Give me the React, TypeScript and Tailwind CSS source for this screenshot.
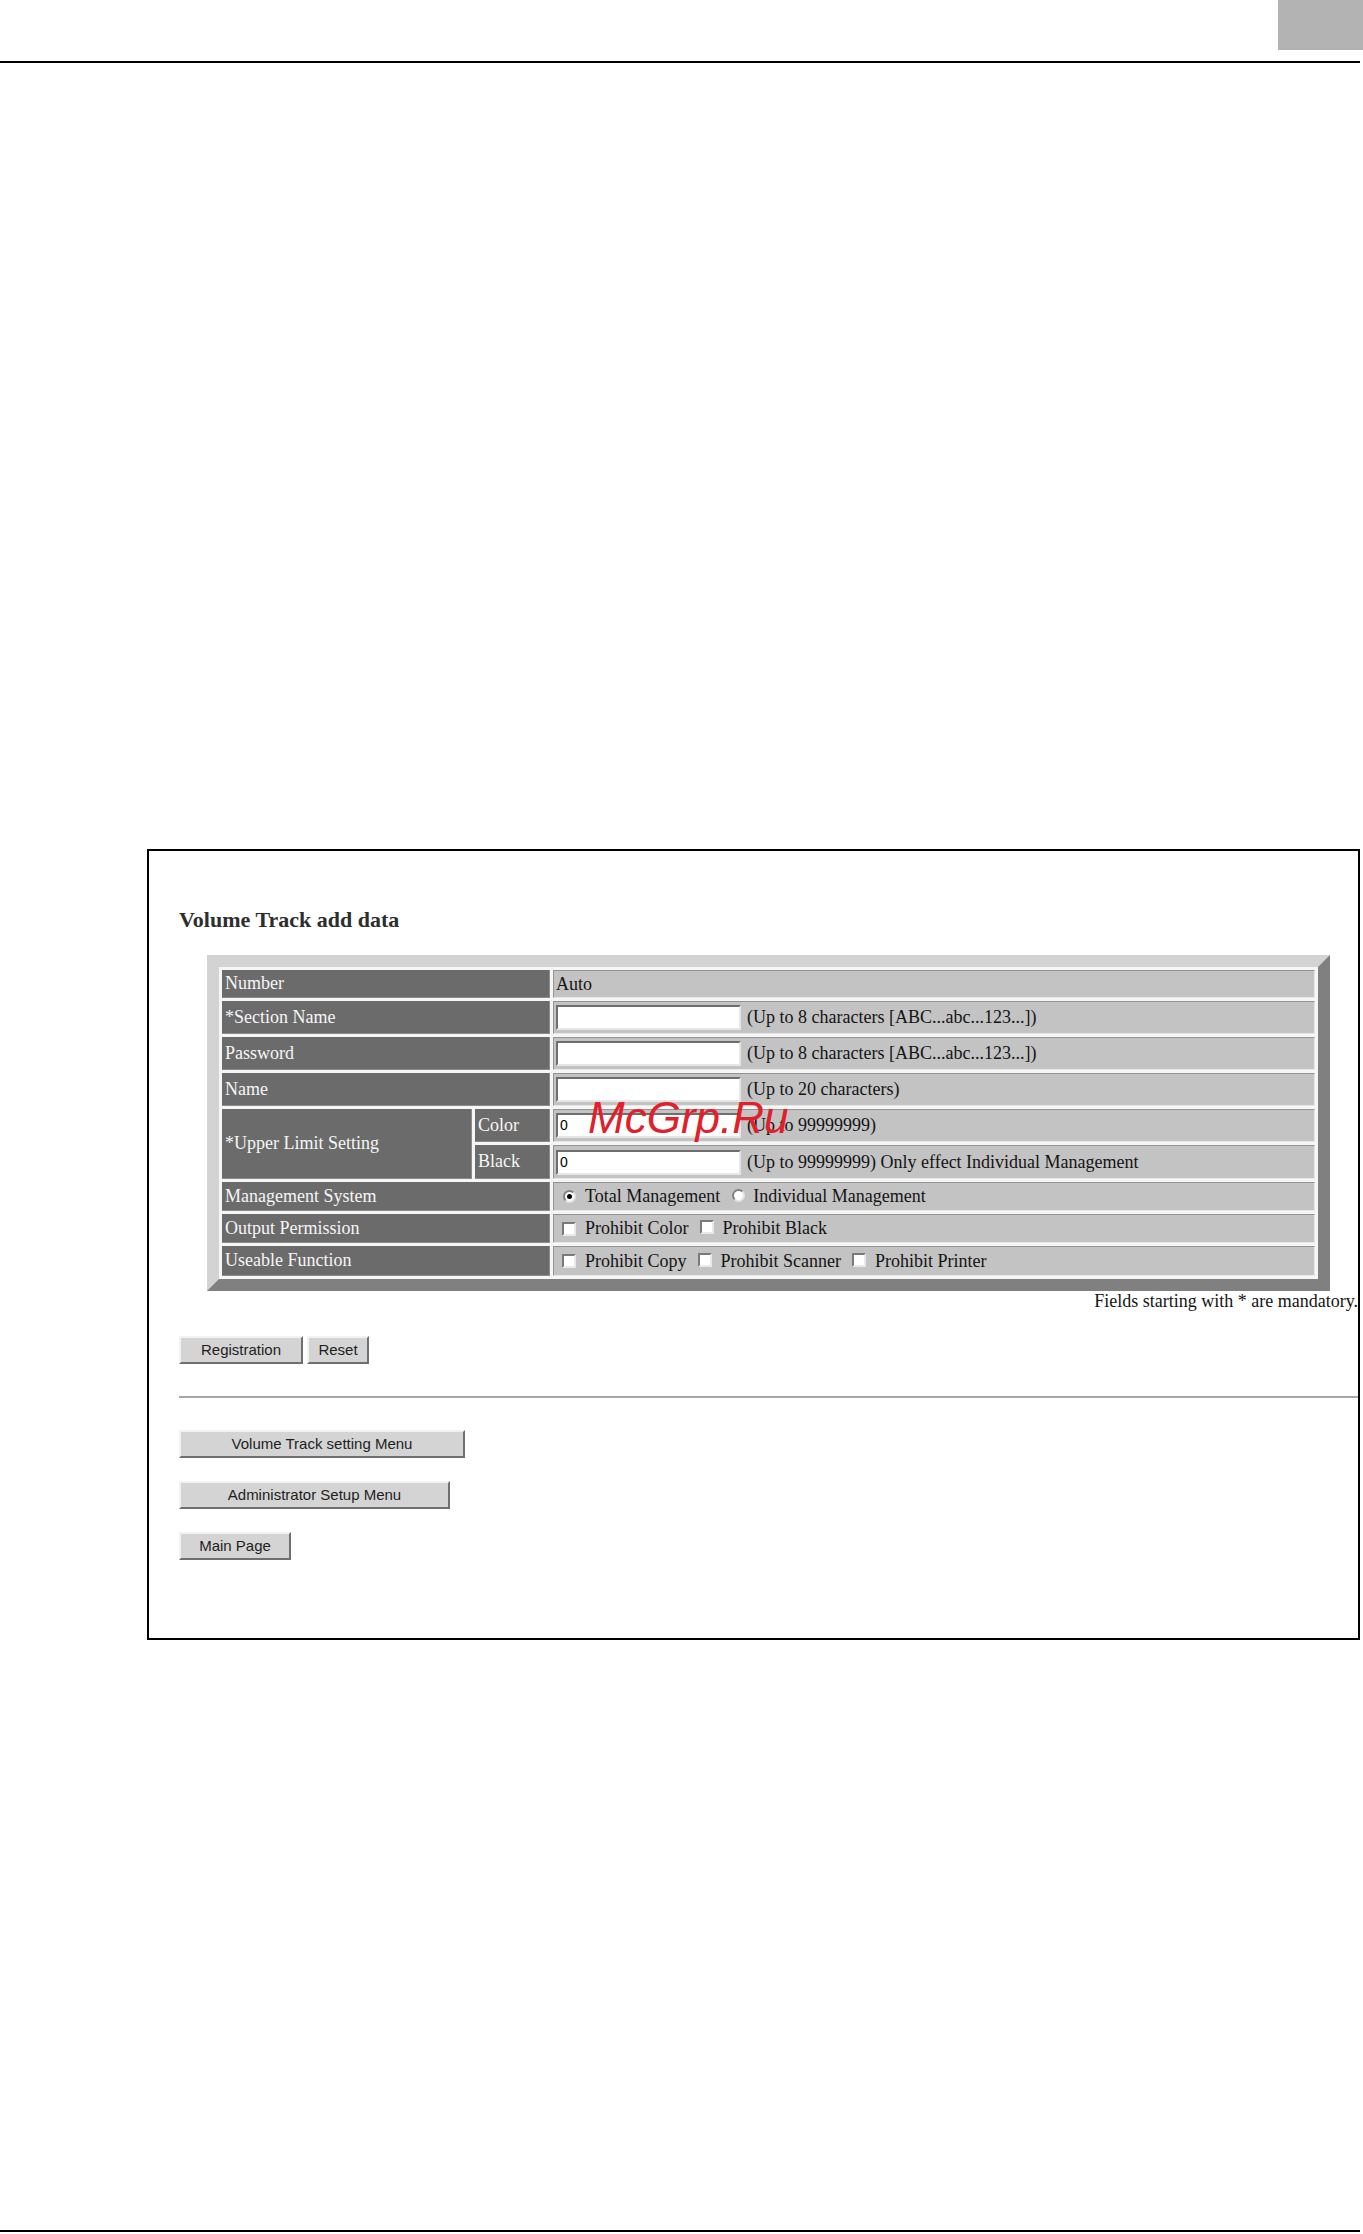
import React from 'react';

const serif = { fontFamily: '"Liberation Serif", "Times New Roman", serif' };

function Checkbox() {
  return (
    <span className="inline-block w-[14px] h-[14px] bg-white border-2 border-t-[#7a7a7a] border-l-[#7a7a7a] border-r-[#e8e8e8] border-b-[#e8e8e8] shrink-0" />
  );
}

function Radio({ checked }: { checked?: boolean }) {
  return (
    <span className="relative inline-flex items-center justify-center w-[13px] h-[13px] rounded-full bg-white border-2 border-t-[#808080] border-l-[#808080] border-r-[#e4e4e4] border-b-[#e4e4e4] shrink-0">
      {checked && <span className="w-[5px] h-[5px] rounded-full bg-black" />}
    </span>
  );
}

function TextInput({ value }: { value?: string }) {
  return (
    <span
      className="inline-flex items-center w-[185px] h-[25px] bg-white border-2 border-t-[#6e6e6e] border-l-[#6e6e6e] border-r-[#e6e6e6] border-b-[#e6e6e6] pl-[2px] text-[14px] text-black shrink-0"
      style={{ fontFamily: '"Liberation Sans", Arial, sans-serif' }}
    >
      {value}
    </span>
  );
}

function Label({ children, className = '' }: { children: React.ReactNode; className?: string }) {
  return (
    <div className={`flex items-center pl-[3px] bg-[#6b6b6b] text-[#f6f6f6] text-[18px] border-b border-r border-b-[#8c8c8c] border-r-[#8c8c8c] whitespace-nowrap ${className}`}>
      {children}
    </div>
  );
}

function Value({ children }: { children: React.ReactNode }) {
  return (
    <div className="flex items-center gap-[6px] pl-[2px] bg-[#c3c3c3] text-[#141414] text-[18px] border border-t-[#949494] border-l-[#949494] border-r-[#e8e8e8] border-b-[#e8e8e8] whitespace-nowrap">
      {children}
    </div>
  );
}

function GrayButton({ label, width }: { label: string; width: string }) {
  return (
    <button
      className={`${width} h-[28px] bg-[#d4d4d4] text-[#1e1e1e] text-[15px] border-2 border-t-[#f2f2f2] border-l-[#f2f2f2] border-r-[#6f6f6f] border-b-[#6f6f6f]`}
      style={{ fontFamily: '"Liberation Sans", Arial, sans-serif' }}
    >
      {label}
    </button>
  );
}

export default function App() {
  return (
    <div className="relative w-[1363px] h-[2234px] bg-white overflow-hidden" style={serif}>
      {/* Page header */}
      <div className="h-[61px] flex justify-end items-start">
        <div className="w-[85px] h-[50px] bg-[#b3b3b3]" />
      </div>
      <div className="w-[1360px] h-[2px] bg-black" />

      {/* Screenshot frame */}
      <div className="mt-[786px] ml-[147px] w-[1213px] border-2 border-black pt-[57px] pb-[78px]">
        <h2 className="ml-[30px] text-[22px] leading-[24px] font-bold text-[#2e2e2e]">Volume Track add data</h2>

        <div className="mt-[23px] ml-[58px] w-[1123px] border-[12px] border-t-[#d3d3d3] border-l-[#d3d3d3] border-r-[#808080] border-b-[#808080]">
          <div className="grid grid-cols-[250px_75px_762px] grid-rows-[28px_33px_33px_33px_33px_34px_29px_29px_30px] gap-[3px] p-[3px] bg-[#f6f6f6]">
            <Label className="col-span-2">Number</Label>
            <Value>Auto</Value>

            <Label className="col-span-2">*Section Name</Label>
            <Value>
              <TextInput />
              <span>(Up to 8 characters [ABC...abc...123...])</span>
            </Value>

            <Label className="col-span-2">Password</Label>
            <Value>
              <TextInput />
              <span>(Up to 8 characters [ABC...abc...123...])</span>
            </Value>

            <Label className="col-span-2">Name</Label>
            <Value>
              <TextInput />
              <span>(Up to 20 characters)</span>
            </Value>

            <Label className="row-span-2">*Upper Limit Setting</Label>
            <Label>Color</Label>
            <Value>
              <TextInput value="0" />
              <span>(Up to 99999999)</span>
            </Value>
            <Label>Black</Label>
            <Value>
              <TextInput value="0" />
              <span>(Up to 99999999) Only effect Individual Management</span>
            </Value>

            <Label className="col-span-2">Management System</Label>
            <Value>
              <span className="flex items-center pl-[7px]">
                <Radio checked />
                <span className="ml-[9px]">Total Management</span>
                <span className="ml-[12px]"><Radio /></span>
                <span className="ml-[8px]">Individual Management</span>
              </span>
            </Value>

            <Label className="col-span-2">Output Permission</Label>
            <Value>
              <span className="flex items-center pl-[6px]">
                <Checkbox />
                <span className="ml-[9px]">Prohibit Color</span>
                <span className="ml-[11px]"><Checkbox /></span>
                <span className="ml-[9px]">Prohibit Black</span>
              </span>
            </Value>

            <Label className="col-span-2">Useable Function</Label>
            <Value>
              <span className="flex items-center pl-[6px]">
                <Checkbox />
                <span className="ml-[9px]">Prohibit Copy</span>
                <span className="ml-[11px]"><Checkbox /></span>
                <span className="ml-[9px]">Prohibit Scanner</span>
                <span className="ml-[11px]"><Checkbox /></span>
                <span className="ml-[9px]">Prohibit Printer</span>
              </span>
            </Value>
          </div>
        </div>

        <p className="text-right text-[18px] leading-[20px] text-[#141414] whitespace-nowrap">
          Fields starting with * are mandatory.
        </p>

        <div className="mt-[25px] ml-[30px] flex gap-[4px]">
          <GrayButton label="Registration" width="w-[124px]" />
          <GrayButton label="Reset" width="w-[62px]" />
        </div>

        <div className="mt-[32px] ml-[30px] h-[2px] bg-[#a6a6a6]" />

        <div className="ml-[30px] flex flex-col items-start">
          <div className="mt-[32px]">
            <GrayButton label="Volume Track setting Menu" width="w-[286px]" />
          </div>
          <div className="mt-[23px]">
            <GrayButton label="Administrator Setup Menu" width="w-[271px]" />
          </div>
          <div className="mt-[23px]">
            <GrayButton label="Main Page" width="w-[112px]" />
          </div>
        </div>
      </div>

      {/* Page footer rule */}
      <div className="mt-[590px] w-[1360px] h-[2px] bg-black" />

      {/* Watermark */}
      <span
        className="absolute left-[588px] top-[1096px] text-[44px] leading-none italic text-[#e0202a]"
        style={{ fontFamily: '"Liberation Sans", Arial, sans-serif' }}
      >
        McGrp.Ru
      </span>
    </div>
  );
}
